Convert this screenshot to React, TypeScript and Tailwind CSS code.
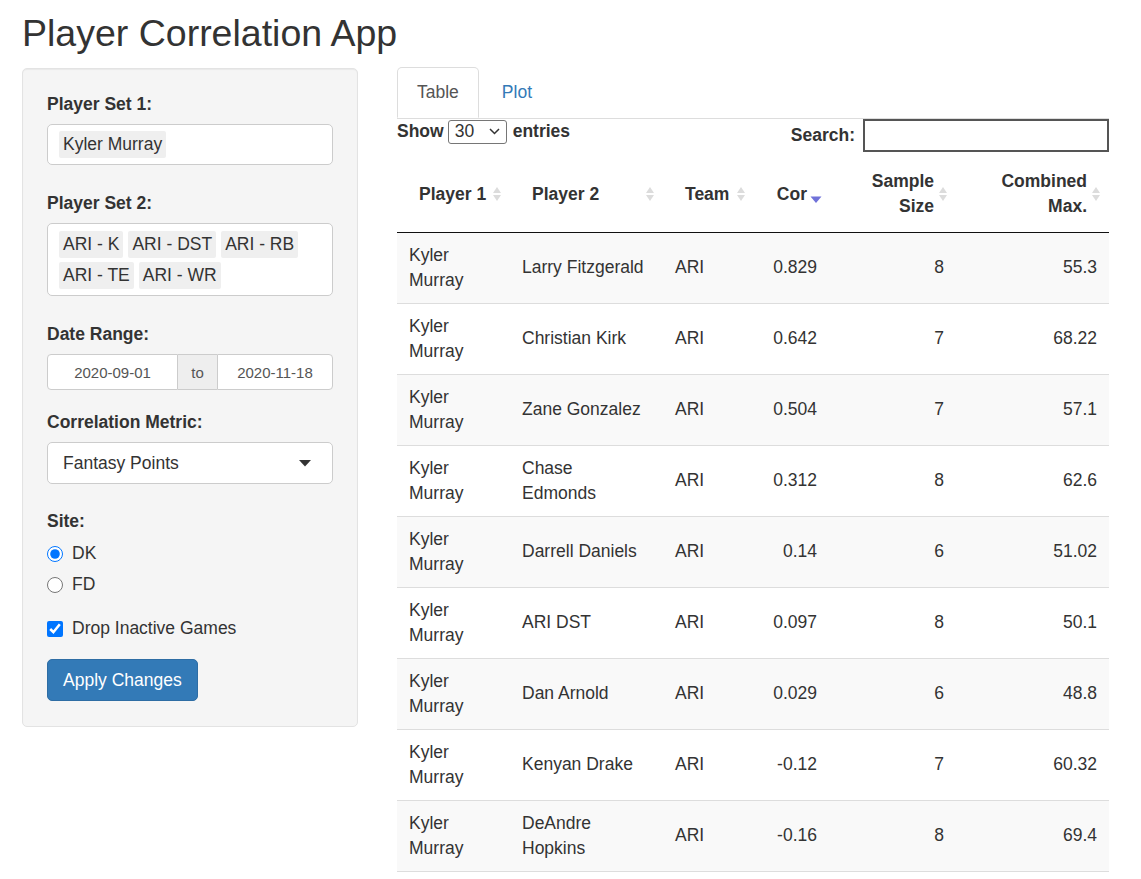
import React from "react";

const rows: string[][] = [
  ["Kyler Murray", "Larry Fitzgerald", "ARI", "0.829", "8", "55.3"],
  ["Kyler Murray", "Christian Kirk", "ARI", "0.642", "7", "68.22"],
  ["Kyler Murray", "Zane Gonzalez", "ARI", "0.504", "7", "57.1"],
  ["Kyler Murray", "Chase\nEdmonds", "ARI", "0.312", "8", "62.6"],
  ["Kyler Murray", "Darrell Daniels", "ARI", "0.14", "6", "51.02"],
  ["Kyler Murray", "ARI DST", "ARI", "0.097", "8", "50.1"],
  ["Kyler Murray", "Dan Arnold", "ARI", "0.029", "6", "48.8"],
  ["Kyler Murray", "Kenyan Drake", "ARI", "-0.12", "7", "60.32"],
  ["Kyler Murray", "DeAndre\nHopkins", "ARI", "-0.16", "8", "69.4"],
];

function SortBoth() {
  return (
    <svg width="10" height="20" viewBox="0 0 10 20" className="absolute right-[8px] top-1/2 -translate-y-1/2">
      <polygon points="1,9 9,9 5,3" fill="#dcdcdc" />
      <polygon points="1,11 9,11 5,17" fill="#dcdcdc" />
    </svg>
  );
}

function SortDesc() {
  return (
    <svg width="12" height="20" viewBox="0 0 12 20" className="absolute right-[7px] top-1/2 -translate-y-1/2 mt-[2px]">
      <polygon points="0.5,10.5 11.5,10.5 6,17" fill="#7072d9" />
    </svg>
  );
}

function Chip({ children }: { children: React.ReactNode }) {
  return (
    <span className="inline-block bg-[#efefef] px-[4px] h-[27px] leading-[27px] rounded-[2px] text-[#333]">
      {children}
    </span>
  );
}

export default function App() {
  const headers: { label: React.ReactNode; right: boolean; desc?: boolean }[] = [
    { label: "Player 1", right: false },
    { label: "Player 2", right: false },
    { label: "Team", right: false },
    { label: "Cor", right: true, desc: true },
    { label: (<>Sample<br />Size</>), right: true },
    { label: (<>Combined<br />Max.</>), right: true },
  ];
  return (
    <div
      className="h-[879px] overflow-hidden bg-white text-[#333] text-[17.5px] leading-[25px]"
      style={{ fontFamily: '"Liberation Sans", Arial, Helvetica, sans-serif' }}
    >
      <div className="pl-[22px] pr-[32px]">
        <h2 className="mt-[13px] mb-[14px] text-[37.5px] leading-[41px] font-normal text-[#333]">
          Player Correlation App
        </h2>
        <div className="flex items-start">
          {/* Sidebar */}
          <div className="w-[336px] shrink-0 bg-[#f5f5f5] border border-[#e3e3e3] rounded-[5px] shadow-[inset_0_1px_1px_rgba(0,0,0,0.05)] px-[24px] pt-[23px] pb-[25px]">
            <div className="font-bold">Player Set 1:</div>
            <div className="mt-[7px] h-[41px] bg-white border border-[#ccc] rounded-[5px] pl-[11px] flex items-center">
              <Chip>Kyler Murray</Chip>
            </div>

            <div className="mt-[26px] font-bold">Player Set 2:</div>
            <div className="mt-[7px] h-[73px] bg-white border border-[#ccc] rounded-[5px] pl-[11px] pt-[7px] flex flex-wrap content-start gap-x-[5px] gap-y-[4px]">
              <Chip>ARI - K</Chip>
              <Chip>ARI - DST</Chip>
              <Chip>ARI - RB</Chip>
              <Chip>ARI - TE</Chip>
              <Chip>ARI - WR</Chip>
            </div>

            <div className="mt-[26px] font-bold">Date Range:</div>
            <div className="mt-[7px] h-[36px] flex text-[15px] text-[#555]">
              <div className="w-[131px] bg-white border border-[#ccc] rounded-l-[4px] flex items-center justify-center">2020-09-01</div>
              <div className="w-[39px] bg-[#eee] border-y border-[#ccc] flex items-center justify-center">to</div>
              <div className="flex-1 bg-white border border-[#ccc] rounded-r-[4px] flex items-center justify-center">2020-11-18</div>
            </div>

            <div className="mt-[20px] font-bold">Correlation Metric:</div>
            <div className="mt-[7px] h-[42px] bg-white border border-[#ccc] rounded-[5px] pl-[15px] pr-[21px] flex items-center justify-between">
              <span>Fantasy Points</span>
              <svg width="12" height="7" viewBox="0 0 12 7"><polygon points="0,0 12,0 6,6.5" fill="#333" /></svg>
            </div>

            <div className="mt-[25px] font-bold">Site:</div>
            <div className="mt-[7px] flex flex-col gap-[6px]">
              <label className="flex items-center h-[25px]">
                <input type="radio" name="site" defaultChecked className="w-[16px] h-[16px] m-0 accent-[#0075ff]" />
                <span className="ml-[9px]">DK</span>
              </label>
              <label className="flex items-center h-[25px]">
                <input type="radio" name="site" className="w-[16px] h-[16px] m-0 accent-[#0075ff]" />
                <span className="ml-[9px]">FD</span>
              </label>
            </div>
            <label className="mt-[19px] flex items-center h-[25px]">
              <input type="checkbox" defaultChecked className="w-[16px] h-[16px] m-0 accent-[#0075ff]" />
              <span className="ml-[9px]">Drop Inactive Games</span>
            </label>
            <button className="mt-[18px] h-[42px] px-[15px] bg-[#337ab7] border border-[#2e6da4] rounded-[5px] text-white">
              Apply Changes
            </button>
          </div>

          {/* Main */}
          <div className="ml-[39px] flex-1 -mt-[1px]">
            <div className="flex border-b border-[#ddd]">
              <div className="h-[51px] px-[19px] border border-[#ddd] border-b-transparent rounded-t-[5px] bg-white text-[#555] flex items-center -mb-[1px]">
                Table
              </div>
              <div className="ml-[3px] h-[51px] px-[20px] text-[#337ab7] flex items-center">Plot</div>
            </div>

            <div className="flex justify-between items-start">
              <div className="flex items-center h-[25px] font-bold">
                <span>Show</span>
                <div className="ml-[4px] w-[59px] h-[24px] border border-[#767676] rounded-[3px] bg-white flex items-center justify-between pl-[6px] pr-[6px] font-normal">
                  <span>30</span>
                  <svg width="11" height="7" viewBox="0 0 11 7"><polyline points="1,1 5.5,5.5 10,1" fill="none" stroke="#333" strokeWidth="1.5" /></svg>
                </div>
                <span className="ml-[6px]">entries</span>
              </div>
              <div className="flex items-center font-bold">
                <span>Search:</span>
                <div className="ml-[8px] w-[246px] h-[33px] border-2 border-[#555] bg-white" />
              </div>
            </div>

            <table className="mt-[5px] w-[712px] table-fixed border-collapse">
              <colgroup>
                <col className="w-[113px]" />
                <col className="w-[153px]" />
                <col className="w-[91px]" />
                <col className="w-[75px]" />
                <col className="w-[127px]" />
                <col className="w-[153px]" />
              </colgroup>
              <thead>
                <tr className="border-b border-[#111]">
                  {headers.map((h, i) => (
                    <th
                      key={i}
                      className={`relative h-[75px] px-[22px] py-[12px] font-bold align-middle ${h.right ? "text-right" : "text-left"}`}
                    >
                      {h.label}
                      {h.desc ? <SortDesc /> : <SortBoth />}
                    </th>
                  ))}
                </tr>
              </thead>
              <tbody>
                {rows.map((r, i) => (
                  <tr key={i} className={`${i % 2 === 0 ? "bg-[#f9f9f9]" : "bg-white"} ${i > 0 ? "border-t" : ""} border-b border-[#ddd]`}>
                    {r.map((c, j) => (
                      <td
                        key={j}
                        className={`h-[70px] px-[12px] py-[10px] align-middle whitespace-pre-line ${j >= 3 ? "text-right" : "text-left"}`}
                      >
                        {c}
                      </td>
                    ))}
                  </tr>
                ))}
              </tbody>
            </table>
          </div>
        </div>
      </div>
    </div>
  );
}
